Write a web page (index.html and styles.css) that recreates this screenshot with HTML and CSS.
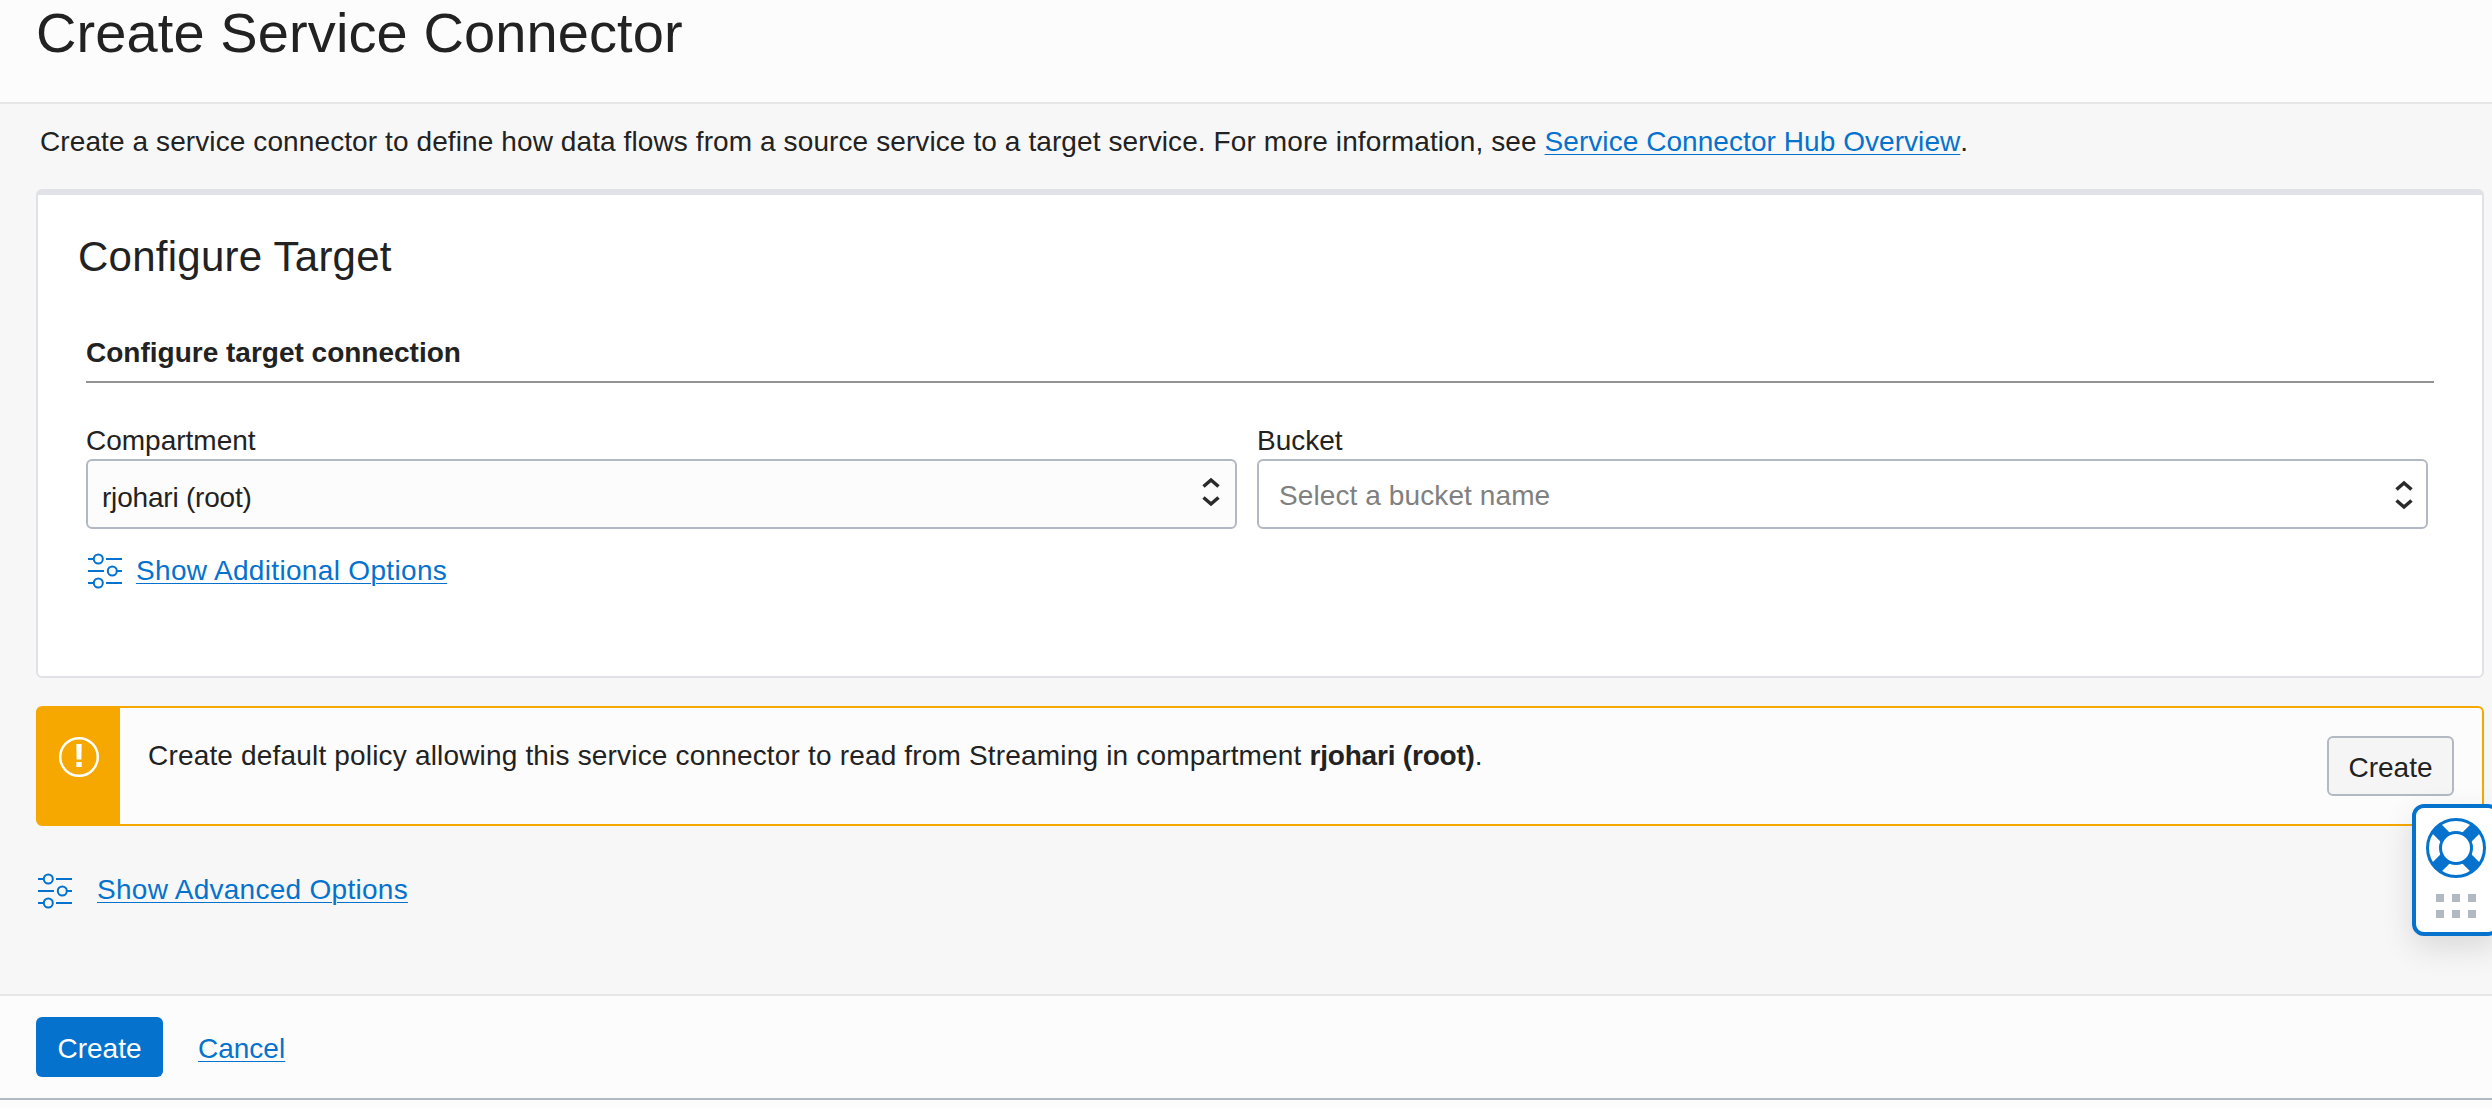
FILE: index.html
```html
<!DOCTYPE html>
<html lang="en">
<head>
<meta charset="utf-8">
<title>Create Service Connector</title>
<link rel="stylesheet" href="styles.css">
</head>
<body>
<svg class="sprite" aria-hidden="true">
  <symbol id="sliders" viewBox="0 0 34 36">
    <g fill="none" stroke="currentColor" stroke-width="2">
      <path d="M0 6h5.500M18 6h16M0 18h16M29 18h5M0 30h5.500M18 30h16"/>
      <circle cx="10.300" cy="6" r="4.500"/><circle cx="24.300" cy="18" r="4.500"/><circle cx="10.300" cy="30" r="4.500"/>
    </g>
  </symbol>
  <symbol id="updown" viewBox="0 0 18 30">
    <path d="M1.500 9.500 9 3l7.500 6.500M1.500 20.500 9 27l7.500-6.500" fill="none" stroke="currentColor" stroke-width="3.500"/>
  </symbol>
</svg>

<header class="header"><h1 class="title">Create Service Connector</h1></header>

<main class="main">
  <p class="intro">Create a service connector to define how data flows from a source service to a target service. For more information, see <a class="link link-overview" href="#">Service Connector Hub Overview</a>.</p>

  <section class="card">
    <h2 class="card-title">Configure Target</h2>
    <h3 class="section-title">Configure target connection</h3>
    <div class="fields">
      <div class="field">
        <label class="label">Compartment</label>
        <div class="select select-filled"><span class="value">rjohari (root)</span><svg class="updown"><use href="#updown"/></svg></div>
      </div>
      <div class="field field-bucket">
        <label class="label">Bucket</label>
        <div class="select select-empty"><span class="placeholder">Select a bucket name</span><svg class="updown"><use href="#updown"/></svg></div>
      </div>
    </div>
    <div class="options"><svg class="sliders"><use href="#sliders"/></svg><a class="link" href="#">Show Additional Options</a></div>
  </section>

  <section class="alert">
    <div class="alert-icon">
      <svg width="42" height="42" viewBox="0 0 42 42"><circle cx="21" cy="21" r="18.800" fill="none" stroke="#fff" stroke-width="2.500"/><path d="M18.300 8h5.400l-.3 15.500h-4.800zM18.300 26h5.400v5h-5.400z" fill="#fff"/></svg>
    </div>
    <p class="alert-text">Create default policy allowing this service connector to read from Streaming in compartment <b>rjohari (root)</b>.</p>
    <button class="button button-default">Create</button>
  </section>

  <div class="options options-advanced"><svg class="sliders"><use href="#sliders"/></svg><a class="link" href="#">Show Advanced Options</a></div>
</main>

<footer class="footer">
  <button class="button button-primary">Create</button>
  <a class="link cancel" href="#">Cancel</a>
</footer>

<aside class="help">
  <svg width="60" height="60" viewBox="0 0 60 60">
    <circle cx="30" cy="30" r="22.500" fill="none" stroke="#fff" stroke-width="12"/>
    <path d="M10.500 10.500 20 20M49.500 10.500 40 20M10.500 49.500 20 40M49.500 49.500 40 40" stroke="#0572ce" stroke-width="13"/>
    <circle cx="30" cy="30" r="28.500" fill="none" stroke="#0572ce" stroke-width="3"/>
    <circle cx="30" cy="30" r="15.500" fill="#fff" stroke="#0572ce" stroke-width="3"/>
  </svg>
  <div class="grip"><i></i><i></i><i></i><i></i><i></i><i></i></div>
</aside>
</body>
</html>
```
FILE: styles.css
```css
* { box-sizing: border-box; }

body {
  margin: 0;
  height: 1108px;
  display: flex;
  flex-direction: column;
  position: relative;
  overflow: hidden;
  background: #fcfcfc;
  color: #222;
  font: 28px/32px "Liberation Sans", Arial, sans-serif;
}

h1, h2, h3, p { margin: 0; font-weight: 400; }
svg { display: block; flex: none; }
.sprite { position: absolute; width: 0; height: 0; }

.link {
  color: #0572ce;
  text-decoration: underline;
  text-decoration-thickness: 1px;
  text-underline-offset: 3px;
}

.header {
  flex: none;
  height: 104px;
  padding-left: 36px;
  border-bottom: 2px solid #e6e6e6;
}
.title { font-size: 56px; line-height: 66px; letter-spacing: .1px; }

.main {
  flex: none;
  height: 890px;
  padding: 22px 8px 0 36px;
  background: #f7f7f7;
}
.intro { padding-left: 4px; height: 63px; letter-spacing: .1px; }
.link-overview { letter-spacing: .06px; }

.card {
  height: 489px;
  padding: 37px 48px 0;
  background: #fff;
  border: 2px solid #e1e2e7;
  border-top-width: 6px;
  border-radius: 6px;
}
.card-title { margin-left: -8px; font-size: 42px; line-height: 50px; letter-spacing: .25px; }
.section-title {
  height: 63px;
  margin-top: 38px;
  padding-top: 17px;
  border-bottom: 2px solid #939393;
  font-size: 28px;
  font-weight: 700;
}

.fields { display: flex; gap: 20px; margin-top: 41px; }
.field { width: 1151px; }
.field-bucket { width: 1171px; }
.label { display: block; height: 35px; padding-top: 1px; }
.select {
  display: flex;
  align-items: flex-start;
  justify-content: space-between;
  height: 70px;
  border: 2px solid #b3b9c3;
  border-radius: 6px;
}
.select-filled { padding: 21px 15px 0 14px; background: #fcfcfc; }
.select-empty { padding: 19px 13px 0 20px; background: #fff; }
.value { letter-spacing: -.2px; }
.placeholder { color: #808080; letter-spacing: .1px; }
.updown { width: 18px; height: 30px; margin-top: -5px; color: #2b2b2b; }
.select-empty .updown { margin-top: 0; }

.options {
  display: flex;
  align-items: center;
  gap: 14px;
  height: 36px;
  margin-top: 24px;
  padding-left: 2px;
  letter-spacing: .33px;
}
.sliders { width: 34px; height: 36px; color: #0572ce; }

.alert {
  display: flex;
  height: 120px;
  margin-top: 28px;
  background: #fcfcfc;
  border: 2px solid #f6a800;
  border-radius: 6px;
}
.alert-icon { width: 82px; padding: 28px 0 0 20px; background: #f6a800; }
.alert-text { flex: 1; padding: 32px 0 0 28px; letter-spacing: .175px; }
.alert-text b { letter-spacing: -.2px; }

.button {
  width: 127px;
  height: 60px;
  padding: 0;
  border-radius: 6px;
  font: inherit;
}
.button-default {
  margin: 28px 28px 0 0;
  padding-top: 4px;
  background: #f5f5f5;
  border: 2px solid #b3b9c3;
  color: #222;
}
.button-primary { background: #0572ce; border: 0; color: #fff; padding-top: 4px; }

.options-advanced { gap: 25px; margin-top: 47px; letter-spacing: .28px; }
.options-advanced .link { margin-top: -2px; }

.footer {
  flex: none;
  display: flex;
  gap: 35px;
  height: 106px;
  padding: 21px 0 0 36px;
  border-top: 2px solid #e6e6e6;
  border-bottom: 2px solid #b3b9c3;
}
.cancel { margin-top: 16px; }

.help {
  position: absolute;
  left: 2412px;
  top: 804px;
  width: 88px;
  height: 132px;
  padding: 10px;
  background: #fff;
  border: 4px solid #0572ce;
  border-radius: 12px;
  box-shadow: 0 12px 32px rgba(0, 0, 0, .12);
}
.grip {
  display: grid;
  grid-template-columns: repeat(3, 8px);
  gap: 8px;
  margin: 16px 0 0 10px;
}
.grip i { height: 8px; background: #b3b9c3; }
```
